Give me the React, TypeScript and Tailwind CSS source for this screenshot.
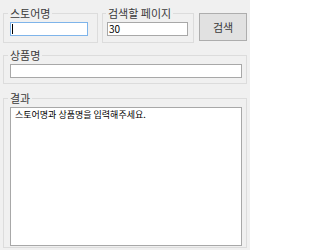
export default function App() {
  return (
    <div className="w-[250px] h-[250px] overflow-hidden bg-[#f0f0f0] pl-[3px] pt-[7px] font-['Noto_Sans_CJK_KR','Noto_Sans',sans-serif] text-[11px] leading-[12px] text-[#3a3a3a]">
      <div className="flex items-start">
        <fieldset className="w-[95px] border border-[#dcdcdc] pl-[6px] pr-[9px] pb-[6px]">
          <legend className="-ml-[2px] px-[2px] h-[12px]">스토어명</legend>
          <div className="mt-[3px] h-[14px] border border-[#7eb4ea] bg-white flex items-center pl-[1px]">
            <div className="w-px h-[10px] bg-black" />
          </div>
        </fieldset>
        <fieldset className="ml-[4px] w-[92px] border border-[#dcdcdc] pl-[4px] pr-[5px] pb-[6px]">
          <legend className="-ml-[1px] px-[2px] h-[12px]">검색할 페이지</legend>
          <div className="mt-[3px] h-[14px] border border-[#a8a8a8] bg-white flex items-center pl-[1px] text-[10px] text-black">
            30
          </div>
        </fieldset>
        <button className="ml-[5px] mt-[6px] w-[48px] h-[28px] border border-[#adadad] bg-[#e1e1e1] text-[11px] text-[#3a3a3a] flex items-center justify-center">
          검색
        </button>
      </div>
      <fieldset className="mt-[6px] w-[244px] border border-[#dcdcdc] pl-[6px] pr-[4px] pb-[5px]">
        <legend className="-ml-[2px] px-[2px] h-[12px]">상품명</legend>
        <div className="mt-[3px] h-[14px] border border-[#a8a8a8] bg-white" />
      </fieldset>
      <fieldset className="mt-[8px] w-[244px] border border-[#dcdcdc] pl-[6px] pr-[4px] pb-[1px]">
        <legend className="-ml-[2px] px-[2px] h-[12px]">결과</legend>
        <div className="mt-[3px] h-[139px] border border-[#a8a8a8] bg-white pl-[4px] pt-[2px] text-[9px] leading-[10px] text-black">
          스토어명과 상품명을 입력해주세요.
        </div>
      </fieldset>
    </div>
  );
}
